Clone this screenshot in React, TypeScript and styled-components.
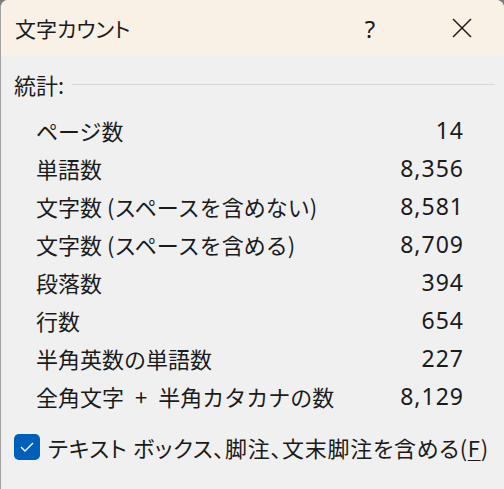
import styled, { createGlobalStyle } from 'styled-components'

const GlobalStyle = createGlobalStyle`
  html, body {
    margin: 0;
    padding: 0;
    background: #7c7c7c;
  }
  body {
    font-family: "Noto Sans CJK JP", "Noto Sans", sans-serif;
    color: #1b1b1b;
  }
`

const Window = styled.div`
  width: 504px;
  height: 489px;
  box-sizing: border-box;
  border-left: 1px solid #a3a3a3;
  border-radius: 8px 8px 0 0;
  overflow: hidden;
  background: #f0f0f0;
  display: flex;
  flex-direction: column;
`

const TitleBar = styled.div`
  height: 56px;
  flex-shrink: 0;
  background: #f9f1e6;
  display: flex;
  align-items: center;
  padding-left: 14px;
`

const Title = styled.div`
  flex: 1;
  font-size: 21px;
  font-feature-settings: 'palt';
`

const TitleButton = styled.div<{ $w: number }>`
  width: ${(p) => p.$w}px;
  height: 56px;
  display: flex;
  align-items: center;
  justify-content: center;
  font-family: "Noto Sans", sans-serif;
  font-size: 24px;
`

const Body = styled.div`
  display: flex;
  flex-direction: column;
  padding: 13px 9px 0 13px;
`

const GroupHead = styled.div`
  display: flex;
  align-items: center;
  gap: 8px;
  font-size: 22px;
  height: 30px;
`

const Rule = styled.div`
  flex: 1;
  height: 1px;
  background: #d7d7d7;
  margin-top: 1px;
`

const Stats = styled.div`
  display: flex;
  flex-direction: column;
  padding: 12px 32px 0 22px;
`

const Row = styled.div`
  display: flex;
  align-items: center;
  justify-content: space-between;
  height: 38px;
  font-size: 22px;
  white-space: pre;
`

const Value = styled.span`
  font-family: "Noto Sans", sans-serif;
  font-size: 23px;
  letter-spacing: 1px;
  margin-right: -1px;
`

const CheckRow = styled.label`
  display: flex;
  align-items: center;
  gap: 8px;
  margin-top: 16px;
  font-size: 22px;
  font-feature-settings: 'palt';
  letter-spacing: 0.7px;
`

const Box = styled.span`
  width: 26px;
  height: 26px;
  border-radius: 5px;
  background: #005fb8;
  display: flex;
  align-items: center;
  justify-content: center;
`

const Key = styled.span`
  text-decoration: underline;
  text-underline-offset: 3px;
  text-decoration-thickness: 1px;
`

const stats: [string, string][] = [
  ['ページ数', '14'],
  ['単語数', '8,356'],
  ['文字数 (スペースを含めない)', '8,581'],
  ['文字数 (スペースを含める)', '8,709'],
  ['段落数', '394'],
  ['行数', '654'],
  ['半角英数の単語数', '227'],
  ['全角文字\u2002+\u2002半角カタカナの数', '8,129'],
]

export default function App() {
  return (
    <Window>
      <GlobalStyle />
      <TitleBar>
        <Title>文字カウント</Title>
        <TitleButton $w={100}>?</TitleButton>
        <TitleButton $w={84}>
          <svg width="20" height="20" viewBox="0 0 20 20">
            <path d="M1 1 L19 19 M19 1 L1 19" stroke="#1b1b1b" strokeWidth="1.5" fill="none" />
          </svg>
        </TitleButton>
      </TitleBar>
      <Body>
        <GroupHead>
          統計:
          <Rule />
        </GroupHead>
        <Stats>
          {stats.map(([label, value]) => (
            <Row key={label}>
              <span>{label}</span>
              <Value>{value}</Value>
            </Row>
          ))}
        </Stats>
        <CheckRow>
          <Box>
            <svg width="14" height="10" viewBox="0 0 14 10">
              <path d="M1 5 L5 9 L13 1" stroke="#fff" strokeWidth="1.4" fill="none" />
            </svg>
          </Box>
          <span>
            テキスト ボックス、脚注、文末脚注を含める(<Key>F</Key>)
          </span>
        </CheckRow>
      </Body>
    </Window>
  )
}
